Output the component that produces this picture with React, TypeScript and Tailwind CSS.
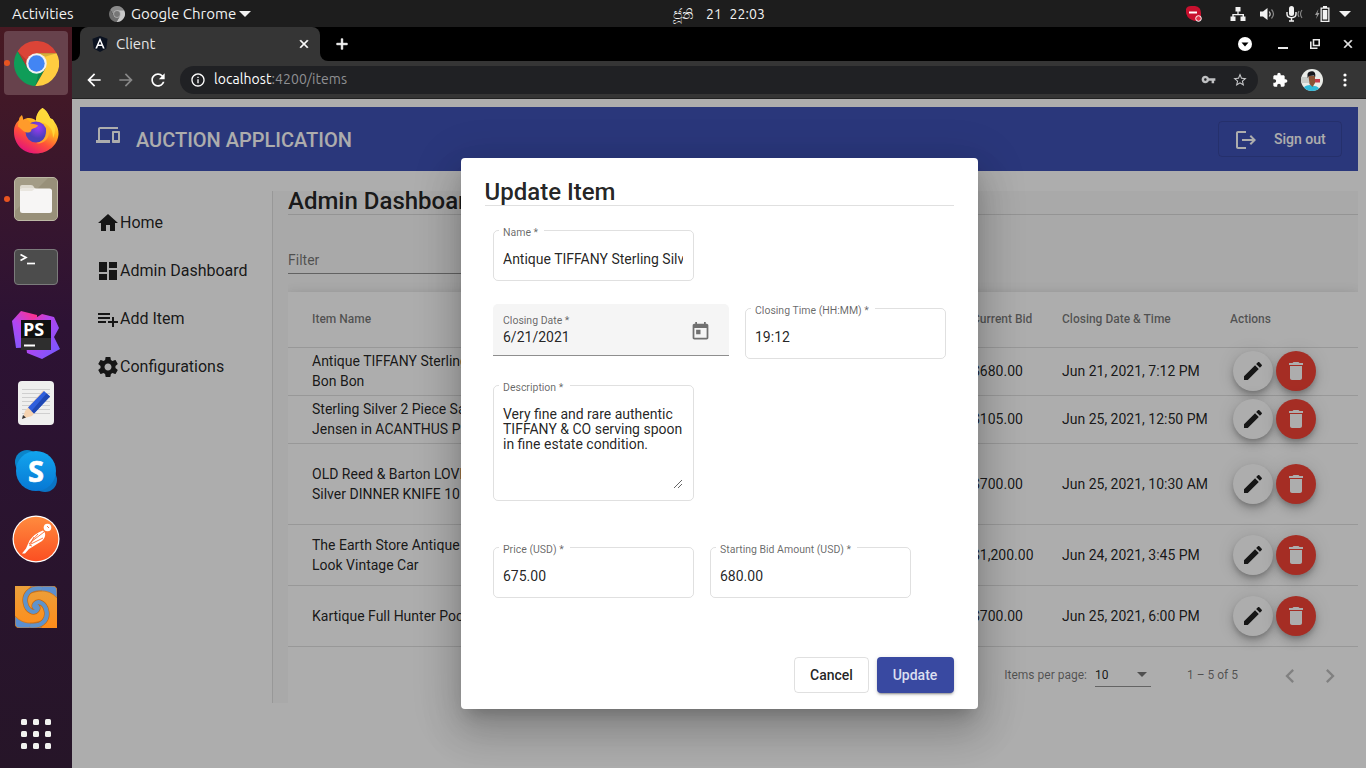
import React from "react";

type IconProps = { d: string; className?: string };

const Icon = ({ d, className = "size-6" }: IconProps) => (
  <svg viewBox="0 0 24 24" fill="currentColor" className={`shrink-0 ${className}`}>
    <path d={d} />
  </svg>
);

const paths = {
  devices: "M4 6h18V4H4c-1.1 0-2 .9-2 2v11H0v3h14v-3H4V6zm19 2h-6c-.55 0-1 .45-1 1v10c0 .55.45 1 1 1h6c.55 0 1-.45 1-1V9c0-.55-.45-1-1-1zm-1 9h-4v-7h4v7z",
  logout: "M17 7l-1.41 1.41L18.17 11H8v2h10.17l-2.58 2.58L17 17l5-5zM4 5h8V3H4c-1.1 0-2 .9-2 2v14c0 1.1.9 2 2 2h8v-2H4V5z",
  home: "M10 20v-6h4v6h5v-8h3L12 3 2 12h3v8z",
  dashboard: "M3 13h8V3H3v10zm0 8h8v-6H3v6zm10 0h8V11h-8v10zm0-18v6h8V3h-8z",
  playlistAdd: "M14 10H2v2h12v-2zm0-4H2v2h12V6zm4 8v-4h-2v4h-4v2h4v4h2v-4h4v-2h-4zM2 16h8v-2H2v2z",
  settings:
    "M19.43 12.98c.04-.32.07-.64.07-.98s-.03-.66-.07-.98l2.11-1.65c.19-.15.24-.42.12-.64l-2-3.46c-.12-.22-.39-.3-.61-.22l-2.49 1c-.52-.4-1.08-.73-1.69-.98l-.38-2.65C14.46 2.18 14.25 2 14 2h-4c-.25 0-.46.18-.49.42l-.38 2.65c-.61.25-1.17.59-1.69.98l-2.49-1c-.23-.09-.49 0-.61.22l-2 3.46c-.13.22-.07.49.12.64l2.11 1.65c-.04.32-.07.65-.07.98s.03.66.07.98l-2.11 1.65c-.19.15-.24.42-.12.64l2 3.46c.12.22.39.3.61.22l2.49-1c.52.4 1.08.73 1.69.98l.38 2.65c.03.24.24.42.49.42h4c.25 0 .46-.18.49-.42l.38-2.65c.61-.25 1.17-.59 1.69-.98l2.49 1c.23.09.49 0 .61-.22l2-3.46c.12-.22.07-.49-.12-.64l-2.11-1.65zM12 15.5c-1.93 0-3.5-1.57-3.5-3.5s1.57-3.5 3.5-3.5 3.5 1.57 3.5 3.5-1.57 3.5-3.5 3.5z",
  edit: "M3 17.25V21h3.75L17.81 9.94l-3.75-3.75L3 17.25zM20.71 7.04c.39-.39.39-1.02 0-1.41l-2.34-2.34c-.39-.39-1.02-.39-1.41 0l-1.83 1.83 3.75 3.75 1.83-1.83z",
  trash: "M6 19c0 1.1.9 2 2 2h8c1.1 0 2-.9 2-2V7H6v12zM19 4h-3.5l-1-1h-5l-1 1H5v2h14V4z",
  today: "M19 3h-1V1h-2v2H8V1H6v2H5c-1.11 0-1.99.9-1.99 2L3 19c0 1.1.89 2 2 2h14c1.1 0 2-.9 2-2V5c0-1.1-.9-2-2-2zm0 16H5V8h14v11zM7 10h5v5H7z",
  chevronLeft: "M15.41 7.41L14 6l-6 6 6 6 1.41-1.41L10.83 12z",
  chevronRight: "M10 6L8.59 7.41 13.17 12l-4.58 4.59L10 18l6-6z",
  back: "M20 11H7.83l5.59-5.59L12 4l-8 8 8 8 1.41-1.41L7.83 13H20v-2z",
  forward: "M12 4l-1.41 1.41L16.17 11H4v2h12.17l-5.58 5.59L12 20l8-8z",
  refresh: "M17.65 6.35C16.2 4.9 14.21 4 12 4c-4.42 0-7.99 3.58-7.99 8s3.57 8 7.99 8c3.73 0 6.84-2.55 7.73-6h-2.08c-.82 2.33-3.04 4-5.65 4-3.31 0-6-2.69-6-6s2.69-6 6-6c1.66 0 3.14.69 4.22 1.78L13 11h7V4l-2.35 2.35z",
  info: "M11 7h2v2h-2zm0 4h2v6h-2zm1-9C6.48 2 2 6.48 2 12s4.48 10 10 10 10-4.48 10-10S17.52 2 12 2zm0 18c-4.41 0-8-3.59-8-8s3.59-8 8-8 8 3.59 8 8-3.59 8-8 8z",
  close: "M19 6.41L17.59 5 12 10.59 6.41 5 5 6.41 10.59 12 5 17.59 6.41 19 12 13.41 17.59 19 19 17.59 13.41 12z",
  plus: "M19 13h-6v6h-2v-6H5v-2h6V5h2v6h6v2z",
  star: "M22 9.24l-7.19-.62L12 2 9.19 8.63 2 9.24l5.46 4.73L5.82 21 12 17.27 18.18 21l-1.63-7.03L22 9.24zM12 15.4l-3.76 2.27 1-4.28-3.32-2.88 4.38-.38L12 6.1l1.71 4.04 4.38.38-3.32 2.88 1 4.28L12 15.4z",
  key: "M12.65 10C11.83 7.67 9.61 6 7 6c-3.31 0-6 2.69-6 6s2.69 6 6 6c2.61 0 4.83-1.67 5.65-4H17v4h4v-4h2v-4H12.65zM7 14c-1.1 0-2-.9-2-2s.9-2 2-2 2 .9 2 2-.9 2-2 2z",
  puzzle: "M20.5 11H19V7c0-1.1-.9-2-2-2h-4V3.5C13 2.12 11.88 1 10.5 1S8 2.12 8 3.5V5H4c-1.1 0-1.99.9-1.99 2v3.8H3.5c1.49 0 2.7 1.21 2.7 2.7s-1.21 2.7-2.7 2.7H2V20c0 1.1.9 2 2 2h3.8v-1.5c0-1.49 1.21-2.7 2.7-2.7 1.49 0 2.7 1.21 2.7 2.7V22H17c1.1 0 2-.9 2-2v-4h1.5c1.38 0 2.5-1.12 2.5-2.5S21.88 11 20.5 11z",
};

const Caret = ({ className = "" }: { className?: string }) => (
  <svg viewBox="0 0 12 6" fill="currentColor" className={`h-1.5 w-3 shrink-0 ${className}`}>
    <path d="M0 0h12L6 6z" />
  </svg>
);

const ChromeRing = ({ gray = false, className }: { gray?: boolean; className: string }) => (
  <svg viewBox="0 0 44 44" className={`shrink-0 ${className}`}>
    <path fill={gray ? "#8a8a8a" : "#db4437"} d="M22 12H41.6A22 22 0 0 0 3.54 10.03L13.34 27 22 22z" />
    <path fill={gray ? "#6e6e6e" : "#0f9d58"} d="M13.34 27L3.54 10.03A22 22 0 0 0 20.86 43.97L30.66 27 22 22z" />
    <path fill={gray ? "#c9c9c9" : "#ffcd40"} d="M30.66 27L20.86 43.97A22 22 0 0 0 41.6 12H22v10z" />
    {!gray && <path d="M22 12h19.6l-11 3.5zM13.3 27L3.54 10.03 13 19zM30.7 27L20.86 43.97 24 31z" opacity=".15" />}
    <circle cx="22" cy="22" r="10" fill={gray ? "#b5b5b5" : "#f1f1f1"} />
    <circle cx="22" cy="22" r="8" fill={gray ? "#777" : "#4285f4"} />
  </svg>
);

const TopBar = () => (
  <header className="flex h-[27px] shrink-0 items-center bg-[#1d1d1d] font-['Ubuntu','Noto_Sans',sans-serif] text-[15px] leading-5 text-[#f2f2f2]">
    <div className="flex w-[600px] items-center pl-3">
      <span className="w-[97px]">Activities</span>
      <ChromeRing gray className="size-4" />
      <span className="ml-1.5 w-[105px] whitespace-nowrap">Google Chrome</span>
      <Caret className="ml-[3px]" />
    </div>
    <div className="flex w-[200px] items-center pl-[73px] text-[14px] whitespace-pre">
      <span className="w-[33px] text-[14px]">ජූනි</span>
      <span className="w-[23.500px]">21</span>
      <span className="tracking-[0.1px]">22:03</span>
    </div>
    <div className="flex flex-1 items-center pl-[385px]">
      <svg viewBox="0 0 18 18" className="h-[18px] w-[18px]">
        <path fill="#c8102e" d="M1 4Q2 1 6 1h4q6 1 6 7v7q-5 2-9 0-6-3-6-8z" />
        <path d="M4 7.5h8" stroke="#fff" strokeWidth="2" />
        <circle cx="13.5" cy="13.5" r="2.8" fill="#e0334a" stroke="#fff" strokeWidth="1" />
      </svg>
      <svg viewBox="0 0 16 14" className="ml-[27px] h-3.5 w-4" fill="#f2f2f2">
        <path d="M5.5 0h5v4.5H8.6V7H14v2.5h1.5V14h-5V9.500h2V8.200H3.700v1.300H5.500V14h-5V9.500H2.300V7h5.100V4.500H5.500z" />
      </svg>
      <svg viewBox="0 0 16 14" className="ml-3.5 h-3.5 w-4" fill="#f2f2f2">
        <path d="M0 4.500h3L7.500 1v12L3 9.500H0z" />
        <path d="M9.200 4.500q2 2.500 0 5" fill="none" stroke="#ccc" strokeWidth="1.200" />
        <path d="M11.500 2.500q4 4.500 0 9" fill="none" stroke="#888" strokeWidth="1.200" />
      </svg>
      <svg viewBox="0 0 17 16" className="ml-[10px] h-4 w-[17px]" fill="#f2f2f2">
        <rect x="3" y="0" width="5" height="10" rx="2.500" />
        <path d="M1 6v2q0 3.700 4.500 3.700T10 8V6M5.500 11.500V15M3 15h5" fill="none" stroke="#f2f2f2" strokeWidth="1.400" />
        <path d="M13 5q-2 3 0 6M16 4q-3 4 0 8" fill="none" stroke="#8a8a8a" strokeWidth="1.100" />
      </svg>
      <svg viewBox="0 0 15 16" className="ml-3 h-4 w-[15px]" fill="#f2f2f2">
        <path d="M3.500 3L0 9h2l-1 4 3.500-6h-2z" fill="#999" />
        <path d="M8 0h4v1.500h2.500V16h-9V1.500H8zM6.800 2.800v11.900h6.400V2.800z" fillRule="evenodd" />
        <path d="M7.700 4h4.600v9.500H7.700z" />
      </svg>
      <Caret className="ml-[9px]" />
    </div>
  </header>
);

const Firefox = () => (
  <svg viewBox="0 0 48 48" className="size-12">
    <defs>
      <linearGradient id="ffBody" x1=".8" y1=".1" x2=".3" y2="1">
        <stop offset="0" stopColor="#fff44f" />
        <stop offset=".35" stopColor="#ffb11f" />
        <stop offset=".65" stopColor="#ff4f3a" />
        <stop offset="1" stopColor="#e3127b" />
      </linearGradient>
      <radialGradient id="ffGlobe" cx=".6" cy=".3">
        <stop offset="0" stopColor="#9a3bf5" />
        <stop offset="1" stopColor="#4b3fb8" />
      </radialGradient>
    </defs>
    <path fill="url(#ffBody)" d="M30.500 1c5 3 6 7 8 10.500 1.500 0 3 1 4 3.500 3 4 4 8 4 12C46 38 36 46.500 24 46.500S2 38 2 25c0-5 1-8 5-12 0-2 1-3.500 3-5l1 5c2-1.500 4-2 6-2 3 0 5 1 7 2.500 0-4.500 2-9.500 6.500-12.500z" />
    <circle cx="24" cy="25" r="10.500" fill="url(#ffGlobe)" />
    <path fill="#ff9b2b" d="M10 8.500l1.500 4.500c3-1.500 5 0 7 3.500 3 0 6 1 7.500 2-.5 2-5.500 3-6.500 4-.5 3-2.500 3-4.500 3-3 0-6-4-9-6 0-4 2-9 4-11z" />
    <path fill="#ffd83a" d="M30.500 1c5 3 5.500 7 8.500 11 5 6 5 13 2 19 0-7-2-11-7-14-3-2-8-2-10-3 0-5 2-10 6.500-13z" opacity=".9" />
    <path fill="#ffb02a" d="M34 18c4 4 4 11 0 15-3 3-7 4-10 3 7-1 11-5 10-18z" opacity=".85" />
  </svg>
);

const dockApps: { name: string; running?: boolean; active?: boolean; icon: React.ReactNode }[] = [
  { name: "chrome", running: true, active: true, icon: <ChromeRing className="size-[45px]" /> },
  { name: "firefox", icon: <Firefox /> },
  {
    name: "files",
    running: true,
    icon: (
      <svg viewBox="0 0 44 44" className="size-11">
        <rect x=".5" y=".5" width="43" height="43" rx="4.500" fill="#a39c86" stroke="#bdb8a5" />
        <path d="M1 34L34 1h5q4 0 4 4v34q0 4-4 4H5q-4 0-4-4z" fill="#989079" />
        <path d="M6 10q0-2 2-2h9q2 0 3 2l1 2h14v5H6z" fill="#dedacf" />
        <rect x="6" y="11.500" width="32" height="24.500" rx="2.500" fill="#f7f6f5" />
        <path d="M6 14h12l4-3H8z" fill="#e9e6df" />
      </svg>
    ),
  },
  {
    name: "terminal",
    icon: (
      <svg viewBox="0 0 44 36" className="h-9 w-11">
        <rect x=".5" y=".5" width="43" height="35" rx="3.500" fill="#4c4c4c" stroke="#7b7b7b" />
        <path d="M6.500 5.500L12 8.500l-5.500 3" fill="none" stroke="#fff" strokeWidth="1.700" />
        <path d="M13 14.500h8" stroke="#fff" strokeWidth="1.700" />
      </svg>
    ),
  },
  {
    name: "phpstorm",
    icon: (
      <svg viewBox="0 0 48 48" className="size-12">
        <defs>
          <linearGradient id="psA" x1="0" y1="1" x2=".8" y2="0">
            <stop offset="0" stopColor="#7a5cff" />
            <stop offset=".5" stopColor="#b345f1" />
            <stop offset="1" stopColor="#ff318c" />
          </linearGradient>
          <linearGradient id="psB" x1="0" y1="0" x2="1" y2="1">
            <stop offset="0" stopColor="#ff318c" />
            <stop offset=".4" stopColor="#b345f1" />
            <stop offset="1" stopColor="#6b5cff" />
          </linearGradient>
        </defs>
        <path fill="url(#psA)" d="M0 10L9 0l16 4v32L4 37z" />
        <path fill="url(#psB)" d="M22 8l8-5 12 3 5 11-5 9 6 12-18 10-15-6-1-8z" />
        <path fill="#111" d="M9 9h30v30H9z" />
        <path fill="#2e2e2e" d="M9 27h30v12H9z" />
        <path fill="#fff" d="M12 33.500h11v2H12z" />
        <text x="11" y="25" fill="#fff" fontFamily="Open Sans, sans-serif" fontWeight="700" fontSize="18">PS</text>
      </svg>
    ),
  },
  {
    name: "editor",
    icon: (
      <svg viewBox="0 0 36 44" className="h-11 w-9">
        <rect width="36" height="44" rx="4" fill="#efefee" />
        <path d="M4 8.500h28M4 12.500h28M4 16.500h28M4 20.500h28M4 24.500h28M4 28.500h28M4 32.500h28" stroke="#cfcfcf" strokeWidth="1" />
        <path d="M25 9.500l6 5.500L14 35l-9 2.500L7 30z" fill="#f5d3b0" />
        <path d="M26 10l6 5.500-16 17-6-6z" fill="#2f5fdc" />
        <path d="M28.500 12.500l3.500 3-16 17-2.500-2.500z" fill="#1f48b4" />
        <path d="M5 34l3 2.500-4 1.500z" fill="#333" />
      </svg>
    ),
  },
  {
    name: "skype",
    icon: (
      <svg viewBox="0 0 42 42" className="size-[42px]">
        <defs>
          <linearGradient id="sky" x1="0" y1="0" x2="0" y2="1">
            <stop offset="0" stopColor="#12a5ee" />
            <stop offset="1" stopColor="#0778d4" />
          </linearGradient>
        </defs>
        <circle cx="12" cy="12" r="12" fill="#0b84c9" />
        <circle cx="30" cy="30" r="12" fill="#0b74c4" />
        <circle cx="21" cy="21" r="20" fill="url(#sky)" />
        <text x="21" y="31.500" textAnchor="middle" fill="#fff" stroke="#fff" strokeWidth=".6" fontFamily="Open Sans, sans-serif" fontWeight="700" fontSize="29">S</text>
      </svg>
    ),
  },
  {
    name: "postman",
    icon: (
      <svg viewBox="0 0 48 48" className="size-12">
        <defs>
          <linearGradient id="pm" x1="0" y1="0" x2="0" y2="1">
            <stop offset="0" stopColor="#ff8b3e" />
            <stop offset="1" stopColor="#fb4f22" />
          </linearGradient>
        </defs>
        <circle cx="24" cy="24" r="23.500" fill="#fff" />
        <circle cx="24" cy="24" r="22.300" fill="url(#pm)" />
        <circle cx="35.500" cy="12.500" r="3.800" fill="#fff" />
        <path fill="#fff" d="M31 15.500l2 2.500q1 4-3 8l-5 3-8 5-4 4.500-3 0 4-5 3.500-8q5-7 13.500-10z" />
        <path d="M32 17L19 27M31 23l-12 6M22 22l-4 8M35 11l2 2M17 30l3 1M26 19l-9 10" stroke="#fc6a30" strokeWidth=".9" />
      </svg>
    ),
  },
  {
    name: "meld",
    icon: (
      <svg viewBox="0 0 42 42" className="size-[42px]">
        <defs>
          <linearGradient id="mo" x1="0" y1="0" x2="0" y2="1">
            <stop offset="0" stopColor="#eaa03c" />
            <stop offset="1" stopColor="#ff8d1a" />
          </linearGradient>
        </defs>
        <path d="M0 0h37q5 0 5 5v37H5q-5 0-5-5z" fill="url(#mo)" />
        <path d="M16 0h21q5 0 5 5v7Q35 4 24 5L12 8zM26 42H5q-5 0-5-5v-7q7 8 18 7l12-3z" fill="#5b8fd0" stroke="#d9770f" strokeWidth=".8" />
        <path d="M27 2.500C13 1 9 10 10.500 17 12 25 19 28 22 24q2-3-1-4M15 39.500C29 41 33 32 31.500 25 30 17 23 14 20 18q-2 3 1 4" fill="none" stroke="#c9690f" strokeWidth="5.600" />
        <path d="M27 2.500C13 1 9 10 10.500 17 12 25 19 28 22 24q2-3-1-4M15 39.500C29 41 33 32 31.500 25 30 17 23 14 20 18q-2 3 1 4" fill="none" stroke="#5f93cc" strokeWidth="4.200" />
      </svg>
    ),
  },
];

const Dock = () => (
  <aside className="flex w-[72px] shrink-0 flex-col items-center gap-1 bg-linear-to-b from-[#481922] via-[#2d1234] via-40% to-[#261528] pt-1">
    {dockApps.map((app) => (
      <div key={app.name} className={`relative flex size-16 items-center justify-center rounded ${app.active ? "bg-[#67424c]" : ""}`}>
        {app.running && <span className="absolute top-[29px] left-0 size-1.5 rounded-full bg-[#e95420]" />}
        {app.icon}
      </div>
    ))}
    <div className="mt-auto mb-[19px] grid grid-cols-3 gap-1.5">
      {Array.from({ length: 9 }, (_, i) => (
        <span key={i} className="size-1.5 rounded-[1.5px] bg-[#f2f2f0]" />
      ))}
    </div>
  </aside>
);

const BrowserChrome = () => (
  <div className="shrink-0 font-['Ubuntu','Noto_Sans',sans-serif] text-[14px]">
    <div className="flex h-[34px] items-stretch bg-black text-white">
      <div className="flex w-2 items-end bg-[#353535]">
        <span className="h-full w-2 rounded-br-lg bg-black" />
      </div>
      <div className="flex w-60 items-center rounded-t-lg bg-[#353535] pr-[9px] pl-3">
        <svg viewBox="0 0 16 16" className="size-4">
          <path d="M8 0l7.500 2.700-1.200 9.800L8 16l-6.300-3.500L.5 2.700z" fill="#0b1220" />
          <path d="M8 1.800L3.300 12.400h1.800l.9-2.400h4l.9 2.400h1.800zM8 5.200l1.400 3.300H6.600z" fill="#fff" />
        </svg>
        <span className="ml-2 flex-1 text-[15px] leading-5 text-[#e6e6e6]">Client</span>
        <Icon d={paths.close} className="size-3.5 stroke-white" />
      </div>
      <div className="flex w-2 items-end bg-[#353535]">
        <span className="h-full w-2 rounded-bl-lg bg-black" />
      </div>
      <div className="flex flex-1 items-center">
        <Icon d={paths.plus} className="ml-[5px] size-[18px] stroke-white" />
        <svg viewBox="0 0 14 14" className="ml-[887px] size-3.5">
          <circle cx="7" cy="7" r="7" fill="#fff" />
          <path d="M3.500 5.500h7L7 9.500z" fill="#000" />
        </svg>
        <span className="mt-2 ml-[26px] h-[2px] w-[10px] bg-[#e8e8e8]" />
        <svg viewBox="0 0 10 10" className="ml-[22px] size-2.5" fill="none" stroke="#e8e8e8" strokeWidth="1.600">
          <path d="M3.500.8h5.700v5.700H3.500zM.8 2.500v6.700h6.700" />
        </svg>
        <Icon d={paths.close} className="ml-[21px] size-3.5 stroke-[#e8e8e8] text-[#e8e8e8]" />
      </div>
    </div>
    <div className="flex h-[38px] items-center border-b border-[#222] bg-[#353535] pl-3 text-white">
      <Icon d={paths.back} className="size-5" />
      <Icon d={paths.forward} className="ml-3 size-5 text-[#888]" />
      <Icon d={paths.refresh} className="ml-3 size-5" />
      <div className="ml-3 flex h-7 w-[1078px] items-center rounded-full bg-[#202124] pr-2.5 pl-2.5">
        <Icon d={paths.info} className="size-4" />
        <span className="ml-2 flex-1 tracking-[0.06px]">
          localhost<span className="text-[#8f9093]">:4200/items</span>
        </span>
        <Icon d={paths.key} className="size-[15px] text-[#bfc0c2]" />
        <Icon d={paths.star} className="ml-4 size-4 text-[#c8c9cb]" />
      </div>
      <Icon d={paths.puzzle} className="ml-[14px] size-4" />
      <svg viewBox="0 0 22 22" className="ml-[13px] size-[22px]">
        <defs>
          <clipPath id="avatarClip">
            <circle cx="11" cy="11" r="11" />
          </clipPath>
        </defs>
        <g clipPath="url(#avatarClip)">
          <path d="M0 0h22v22H0z" fill="#e9ebe7" />
          <path d="M0 8h8v6H0z" fill="#c8ccc8" />
          <path d="M14 10h5v3.500h-5z" fill="#c43a48" />
          <path d="M2 22q0-6 7-6l4 1q5 0 6 5z" fill="#2fb8d8" />
          <path d="M7.500 7h6.500v7l-2.500 4-3-3z" fill="#8a5436" />
          <path d="M6.500 9V5q1-3 5-2.700Q15 3 14.200 8L13 6.500 8 7z" fill="#17171c" />
        </g>
      </svg>
      <svg viewBox="0 0 4 14" className="ml-5 h-3.5 w-1" fill="#fff">
        <circle cx="2" cy="2" r="1.600" />
        <circle cx="2" cy="7" r="1.600" />
        <circle cx="2" cy="12" r="1.600" />
      </svg>
    </div>
  </div>
);

const nav = [
  { label: "Home", d: paths.home },
  { label: "Admin Dashboard", d: paths.dashboard },
  { label: "Add Item", d: paths.playlistAdd },
  { label: "Configurations", d: paths.settings },
];

const items = [
  { lines: ["Antique TIFFANY Sterling Silver", "Bon Bon"], bid: "$680.00", closes: "Jun 21, 2021, 7:12 PM", height: "h-12 pb-px" },
  { lines: ["Sterling Silver 2 Piece Salad", "Jensen in ACANTHUS P"], bid: "$105.00", closes: "Jun 25, 2021, 12:50 PM", height: "h-12 pb-px" },
  { lines: ["OLD Reed & Barton LOVE", "Silver DINNER KNIFE 10"], bid: "$700.00", closes: "Jun 25, 2021, 10:30 AM", height: "h-[81px]" },
  { lines: ["The Earth Store Antique", "Look Vintage Car"], bid: "$1,200.00", closes: "Jun 24, 2021, 3:45 PM", height: "h-[61px]" },
  { lines: ["Kartique Full Hunter Pocket"], bid: "$700.00", closes: "Jun 25, 2021, 6:00 PM", height: "h-[61px]" },
];

const fab =
  "flex size-10 items-center justify-center rounded-full shadow-[0_3px_5px_-1px_rgba(0,0,0,.2),0_6px_10px_0_rgba(0,0,0,.14),0_1px_18px_0_rgba(0,0,0,.12)]";

const row = "grid grid-cols-[660px_90px_168px_1fr] items-center border-b border-black/12 pl-6";

const ItemsTable = () => (
  <div className="mt-[18px] bg-white shadow-[0_5px_5px_-3px_rgba(0,0,0,.2),0_8px_10px_1px_rgba(0,0,0,.14),0_3px_14px_2px_rgba(0,0,0,.12)]">
    <div className={`${row} h-14 pb-px text-xs font-medium text-black/54`}>
      <span>Item Name</span>
      <span className="whitespace-nowrap">Current Bid</span>
      <span>Closing Date &amp; Time</span>
      <span>Actions</span>
    </div>
    {items.map((item) => (
      <div key={item.lines[0]} className={`${row} ${item.height} text-sm whitespace-nowrap text-black/87`}>
        <div>
          {item.lines.map((line) => (
            <p key={line} className="leading-5">{line}</p>
          ))}
        </div>
        <span>{item.bid}</span>
        <span>{item.closes}</span>
        <div className="flex gap-[3px] pl-[3px]">
          <button className={`${fab} bg-white`}>
            <Icon d={paths.edit} />
          </button>
          <button className={`${fab} bg-[#f44336] text-white`}>
            <Icon d={paths.trash} />
          </button>
        </div>
      </div>
    ))}
    <div className="flex h-14 items-center justify-end pr-2 text-xs text-black/54">
      <span>Items per page:</span>
      <div className="ml-2 flex h-[23px] w-14 items-center justify-between border-b border-black/42 pr-1 text-black/87">
        <span>10</span>
        <svg viewBox="0 0 10 5" className="h-[5px] w-2.5 fill-black/54">
          <path d="M0 0h10L5 5z" />
        </svg>
      </div>
      <span className="ml-9">1 – 5 of 5</span>
      <span className="mt-px ml-8 flex size-10 items-center justify-center text-black/26">
        <Icon d={paths.chevronLeft} className="size-7" />
      </span>
      <span className="mt-px flex size-10 items-center justify-center text-black/26">
        <Icon d={paths.chevronRight} className="size-7" />
      </span>
    </div>
  </div>
);

type FieldProps = { label: string; notch: string; children: React.ReactNode; className?: string };

const OutlinedField = ({ label, notch, children, className = "h-[51px]" }: FieldProps) => (
  <div className={`relative w-[201px] rounded-[5px] border border-black/12 px-[9px] text-sm leading-4 text-black/87 ${className}`}>
    <label className={`absolute -top-1 left-[5px] h-3 bg-white pl-1 text-[10.5px] leading-3 whitespace-nowrap text-black/60 ${notch}`}>{label}</label>
    {children}
  </div>
);

const UpdateDialog = () => (
  <div className="flex h-[551px] w-[517px] flex-col rounded bg-white px-6 pt-5 pb-4 shadow-[0_11px_15px_-7px_rgba(0,0,0,.2),0_24px_38px_3px_rgba(0,0,0,.14),0_9px_46px_8px_rgba(0,0,0,.12)]">
    <h2 className="h-7 border-b border-black/12 text-2xl leading-7 font-medium text-black/87">
      <span className="-ml-[0.500px]">Update Item</span>
    </h2>
    <form className="flex flex-col pt-6 pl-2">
      <OutlinedField label="Name *" notch="w-[45px]">
        <div className="mt-5 w-[180px] overflow-hidden whitespace-nowrap">Antique TIFFANY Sterling Silver</div>
      </OutlinedField>
      <div className="mt-[23px] flex gap-4">
        <div className="flex h-[52px] w-[236px] items-center justify-between rounded-t-[5px] border-b border-black/42 bg-[#f5f5f5] pr-[18px] pl-2.5 text-black/87">
          <div className="pb-[2px]">
            <p className="text-[10.5px] leading-4 text-black/60">Closing Date *</p>
            <p className="text-sm leading-4">6/21/2021</p>
          </div>
          <Icon d={paths.today} className="mt-1 size-[21px] text-black/54" />
        </div>
        <OutlinedField label="Closing Time (HH:MM) *" notch="w-[124px]" className="mt-1 h-[51px]">
          <div className="mt-5">19:12</div>
        </OutlinedField>
      </div>
      <OutlinedField label="Description *" notch="w-[71px]" className="mt-[26px] h-[116px]">
        <div className="mt-[21px] w-[182px] leading-[15px]">
          Very fine and rare authentic
          <br />
          TIFFANY &amp; CO serving spoon
          <br />
          in fine estate condition.
        </div>
        <svg viewBox="0 0 8 8" className="absolute right-[11px] bottom-3 size-2" stroke="#555" strokeWidth=".9">
          <path d="M0 8L8 0M4 8l4-4" />
        </svg>
      </OutlinedField>
      <div className="mt-[46px] flex gap-4">
        <OutlinedField label="Price (USD) *" notch="w-[71px]">
          <div className="mt-5">675.00</div>
        </OutlinedField>
        <OutlinedField label="Starting Bid Amount (USD) *" notch="w-[141px]">
          <div className="mt-5">680.00</div>
        </OutlinedField>
      </div>
    </form>
    <div className="mt-auto flex justify-end gap-2 text-sm font-medium">
      <button className="h-9 w-[75px] rounded border border-black/12 text-black/87">Cancel</button>
      <button className="h-9 w-[77px] rounded bg-[#3949a1] pr-px text-[#dcdff0] shadow-[0_3px_1px_-2px_rgba(0,0,0,.2),0_2px_2px_0_rgba(0,0,0,.14),0_1px_5px_0_rgba(0,0,0,.12)]">Update</button>
    </div>
  </div>
);

const AuctionPage = () => (
  <main className="relative flex-1 overflow-hidden bg-white p-2 font-['Roboto',sans-serif] text-black/87">
    <div className="flex h-16 items-center justify-between bg-[#3f51b5] px-4 text-white">
      <div className="flex items-center">
        <Icon d={paths.devices} className="-mt-2 size-6" />
        <h1 className="mt-0.5 ml-4 text-xl font-medium">AUCTION APPLICATION</h1>
      </div>
      <button className="flex h-9 w-[124px] items-center rounded border border-black/12 pl-[15px] text-sm font-medium">
        <Icon d={paths.logout} className="mt-px size-6" />
        <span className="ml-4">Sign out</span>
      </button>
    </div>
    <div className="mt-5 flex">
      <nav className="flex h-[512px] w-[193px] shrink-0 flex-col gap-6 border-r border-black/12 pt-5 pl-4">
        {nav.map((entry) => (
          <a key={entry.label} className="flex h-6 items-center text-base">
            <Icon d={entry.d} />
            {entry.label}
          </a>
        ))}
      </nav>
      <div className="h-[512px] flex-1 bg-[#fafafa] pl-[15px]">
        <section className="h-full overflow-hidden">
          <h2 className="h-6 border-b border-black/12 text-2xl leading-5 font-medium">Admin Dashboard</h2>
          <div className="mt-[34px] h-[25px] w-[400px] border-b border-black/42 text-sm leading-[22px] text-black/54">Filter</div>
          <ItemsTable />
        </section>
      </div>
    </div>
    <div className="absolute inset-0 flex items-center justify-center bg-black/32 pl-px">
      <UpdateDialog />
    </div>
  </main>
);

export default function App() {
  return (
    <div className="flex h-screen w-screen flex-col overflow-hidden bg-black">
      <TopBar />
      <div className="flex min-h-0 flex-1">
        <Dock />
        <div className="flex min-w-0 flex-1 flex-col">
          <BrowserChrome />
          <AuctionPage />
        </div>
      </div>
    </div>
  );
}
